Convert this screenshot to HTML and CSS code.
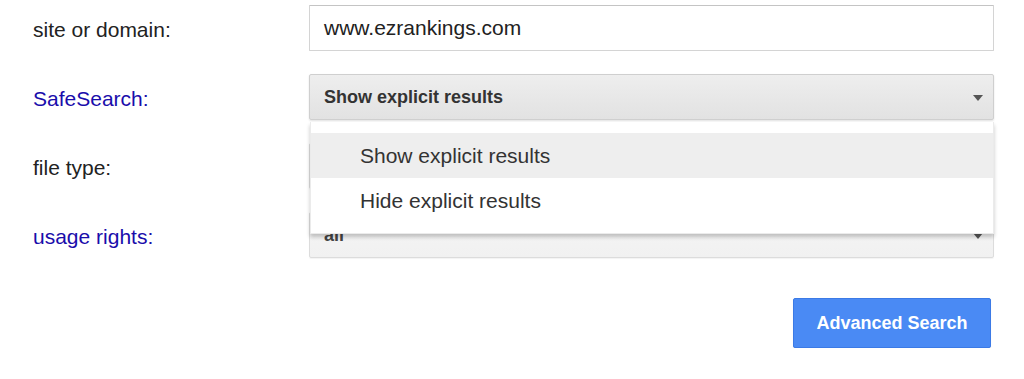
FILE: index.html
```html
<!DOCTYPE html>
<html>
<head>
<meta charset="utf-8">
<title>Advanced Search</title>
<link rel="stylesheet" href="styles.css">
</head>
<body>
<div class="form">
  <div class="row">
    <div class="lbl">site or domain:</div>
    <div class="field"><div class="input">www.ezrankings.com</div></div>
  </div>
  <div class="row">
    <div class="lbl link">SafeSearch:</div>
    <div class="field">
      <div class="select active"><span>Show explicit results</span><i class="caret"></i></div>
      <div class="menu">
        <div class="item hl">Show explicit results</div>
        <div class="item">Hide explicit results</div>
      </div>
    </div>
  </div>
  <div class="row">
    <div class="lbl">file type:</div>
    <div class="field"><div class="select"><span></span><i class="caret"></i></div></div>
  </div>
  <div class="row">
    <div class="lbl link">usage rights:</div>
    <div class="field"><div class="select"><span>all</span><i class="caret"></i></div></div>
  </div>
  <div class="actions">
    <button class="btn">Advanced Search</button>
  </div>
</div>
</body>
</html>
```

FILE: styles.css
```css
html, body {
  margin: 0;
  padding: 0;
  background: #fff;
}
body {
  font-family: "Liberation Sans", Arial, sans-serif;
  color: #222;
}
.form {
  padding: 5px 30px 0 33px;
}
.row {
  display: grid;
  grid-template-columns: 276px 1fr;
  align-items: center;
  height: 46px;
  margin-bottom: 23px;
}
.lbl {
  font-size: 21px;
  color: #222;
  line-height: 24px;
  padding-top: 3px;
}
.lbl.link {
  color: #1a0dab;
}
.field {
  position: relative;
  height: 46px;
}
.input {
  box-sizing: border-box;
  height: 46px;
  border: 1px solid #d4d4d4;
  border-top-color: #c4c4c4;
  border-radius: 1px;
  padding: 0 14px;
  font-size: 21px;
  line-height: 44px;
  color: #222;
  background: #fff;
}
.select {
  box-sizing: border-box;
  height: 46px;
  border: 1px solid #dcdcdc;
  border-radius: 2px;
  background: linear-gradient(#f5f5f5, #f1f1f1);
  display: flex;
  align-items: center;
  justify-content: space-between;
  padding: 0 10px 0 14px;
  font-size: 18px;
  font-weight: bold;
  color: #444;
  box-shadow: 0 1px 1px rgba(0,0,0,0.05);
}
.select.active {
  background: linear-gradient(#eeeeee, #e2e2e2);
  border-color: #cfcfcf;
  color: #333;
  box-shadow: 0 1px 2px rgba(0,0,0,0.12);
}
.caret {
  width: 0;
  height: 0;
  border-left: 5px solid transparent;
  border-right: 5px solid transparent;
  border-top: 6px solid #555;
  margin-top: 2px;
}
.menu {
  position: absolute;
  top: 48px;
  left: 1px;
  right: 0;
  z-index: 10;
  background: #fff;
  padding: 11px 0 10px;
  border: 1px solid rgba(0,0,0,0.08);
  border-top: 0;
  box-shadow: 0 3px 4px rgba(0,0,0,0.22);
}
.item {
  height: 45px;
  line-height: 45px;
  padding-left: 49px;
  font-size: 21px;
  color: #333;
}
.item.hl {
  background: #eeeeee;
}
.actions {
  display: flex;
  justify-content: flex-end;
  margin-top: 40px;
  padding-right: 3px;
}
.btn {
  width: 198px;
  height: 50px;
  border: 1px solid #3b7ae6;
  border-radius: 2px;
  background: #4a8af4;
  color: #fff;
  font-family: "Liberation Sans", Arial, sans-serif;
  font-size: 18px;
  font-weight: bold;
  padding: 0;
  box-shadow: 0 1px 1px rgba(0,0,0,0.1);
}
```
